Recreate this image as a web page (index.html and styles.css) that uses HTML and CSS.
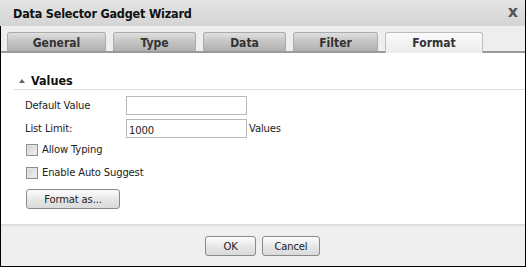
FILE: index.html
```html
<!DOCTYPE html>
<html>
<head>
<meta charset="utf-8">
<link rel="stylesheet" href="styles.css">
</head>
<body>
<div class="window">
  <div class="titlebar">
    <span class="title">Data Selector Gadget Wizard</span>
    <span class="close">x</span>
  </div>
  <div class="body">
    <div class="tabs">
      <div class="tab t-general">General</div>
      <div class="tab t-type">Type</div>
      <div class="tab t-data">Data</div>
      <div class="tab t-filter">Filter</div>
      <div class="tab active t-format">Format</div>
    </div>
    <div class="content">
      <div class="section-head">
        <span class="tri"></span><span class="section-title">Values</span>
      </div>
      <div class="form">
        <div class="row">
          <label class="lbl">Default Value</label>
          <div class="input"></div>
        </div>
        <div class="row">
          <label class="lbl">List Limit:</label>
          <div class="input filled">1000</div>
          <span class="suffix">Values</span>
        </div>
        <div class="check-row"><span class="cb"></span><span>Allow Typing</span></div>
        <div class="check-row"><span class="cb"></span><span>Enable Auto Suggest</span></div>
        <div class="btn fmt">Format as...</div>
      </div>
    </div>
    <div class="footer">
      <div class="btn ok">OK</div>
      <div class="btn cancel">Cancel</div>
    </div>
  </div>
</div>
</body>
</html>
```

FILE: styles.css
```css
html, body { margin: 0; padding: 0; background: #fff; }
body { font-family: "DejaVu Sans", "Liberation Sans", sans-serif; color: #222; }
.window {
  width: 526px; height: 267px; box-sizing: border-box;
  border-right: 1px solid #000;
  display: flex; flex-direction: column;
}
.titlebar {
  height: 26px; flex: none;
  background: linear-gradient(#e4e4e4, #d4d4d4);
  display: flex; align-items: center; justify-content: space-between;
  padding: 0 7px 0 13px;
}
.title { font-family: "DejaVu Sans Condensed", "DejaVu Sans", sans-serif; font-stretch: condensed; font-weight: bold; font-size: 12.5px; color: #111; letter-spacing: -0.2px; }
.close { font-family: "DejaVu Sans", sans-serif; font-weight: bold; font-size: 16px; color: #555; line-height: 1; margin-top: -3px; }
.body {
  flex: 1; display: flex; flex-direction: column;
  border-left: 1px solid #000; border-bottom: 1px solid #000;
}
.tabs {
  height: 27px; flex: none; background: #eeeeee;
  display: flex; align-items: flex-end; padding-left: 6px;
  border-bottom: 2px solid #9a9a9a; box-sizing: border-box;
}
.tab {
  height: 19px; box-sizing: border-box;
  border: 1px solid #ababab; border-bottom: none;
  border-radius: 3px 3px 0 0;
  background: linear-gradient(#e0e0e0 0%, #c6c6c6 45%, #b0b0b0 100%);
  font-family: "DejaVu Sans Condensed", "DejaVu Sans", sans-serif; font-stretch: condensed;
  font-weight: bold; font-size: 12px; color: #333;
  display: flex; align-items: center; justify-content: center;
  margin-right: 7px; padding-top: 1px;
}
.t-general { width: 99px; }
.t-type { width: 83px; }
.t-data { width: 83px; }
.t-filter { width: 85px; }
.t-format { width: 98px; }
.tab.active {
  background: linear-gradient(#fbfbfb, #ececec);
  height: 21px; margin-bottom: -2px; border-color: #bcbcbc; padding-top: 0;
}
.content { flex: 1; background: #fff; }
.section-head {
  margin: 19px 0 0 13px; height: 17px; border-bottom: 1px solid #dcdcdc;
  display: flex; align-items: center;
}
.tri {
  width: 0; height: 0; margin: 0 6px 0 5px;
  border-left: 3.5px solid transparent; border-right: 3.5px solid transparent;
  border-bottom: 4px solid #666;
}
.section-title { font-family: "DejaVu Sans Condensed", "DejaVu Sans", sans-serif; font-stretch: condensed; font-weight: bold; font-size: 12.5px; color: #111; }
.form { padding: 6px 0 0 24px; font-family: "DejaVu Sans", sans-serif; font-size: 10px; letter-spacing: -0.15px; color: #222; }
.row { display: flex; align-items: center; height: 19px; margin-bottom: 4px; }
.lbl { width: 101px; }
.input {
  width: 121px; height: 19px; box-sizing: border-box;
  border: 1px solid #b9b9b9; background: #fff;
  display: flex; align-items: center; padding: 3px 0 0 2px;
}
.suffix { margin-left: 2px; }
.check-row { display: flex; align-items: center; height: 13px; margin: 5px 0 10px 1px; }
.check-row + .check-row { margin-top: 0; }
.cb {
  width: 12px; height: 12px; box-sizing: border-box; margin-right: 4px;
  border: 1px solid #8e8e8e;
  background: linear-gradient(135deg, #d0d0d0, #f4f4f4);
  box-shadow: inset 0 0 0 1px #e6e6e6;
}
.btn {
  box-sizing: border-box; height: 20px;
  border: 1px solid #8a8a8a; border-radius: 3px;
  background: linear-gradient(#fdfdfd, #e6e6e6 55%, #dadada);
  display: flex; align-items: center; justify-content: center;
  font-family: "DejaVu Sans", sans-serif; font-size: 10px; letter-spacing: -0.15px; color: #222;
}
.fmt { width: 94px; margin: 4px 0 0 1px; }
.footer {
  height: 42px; flex: none; background: #efefef; border-top: 2px solid #dedede;
  display: flex; align-items: center; justify-content: center; gap: 6px;
  padding-right: 1px; box-sizing: border-box;
}
.ok { width: 51px; }
.cancel { width: 58px; }
```
